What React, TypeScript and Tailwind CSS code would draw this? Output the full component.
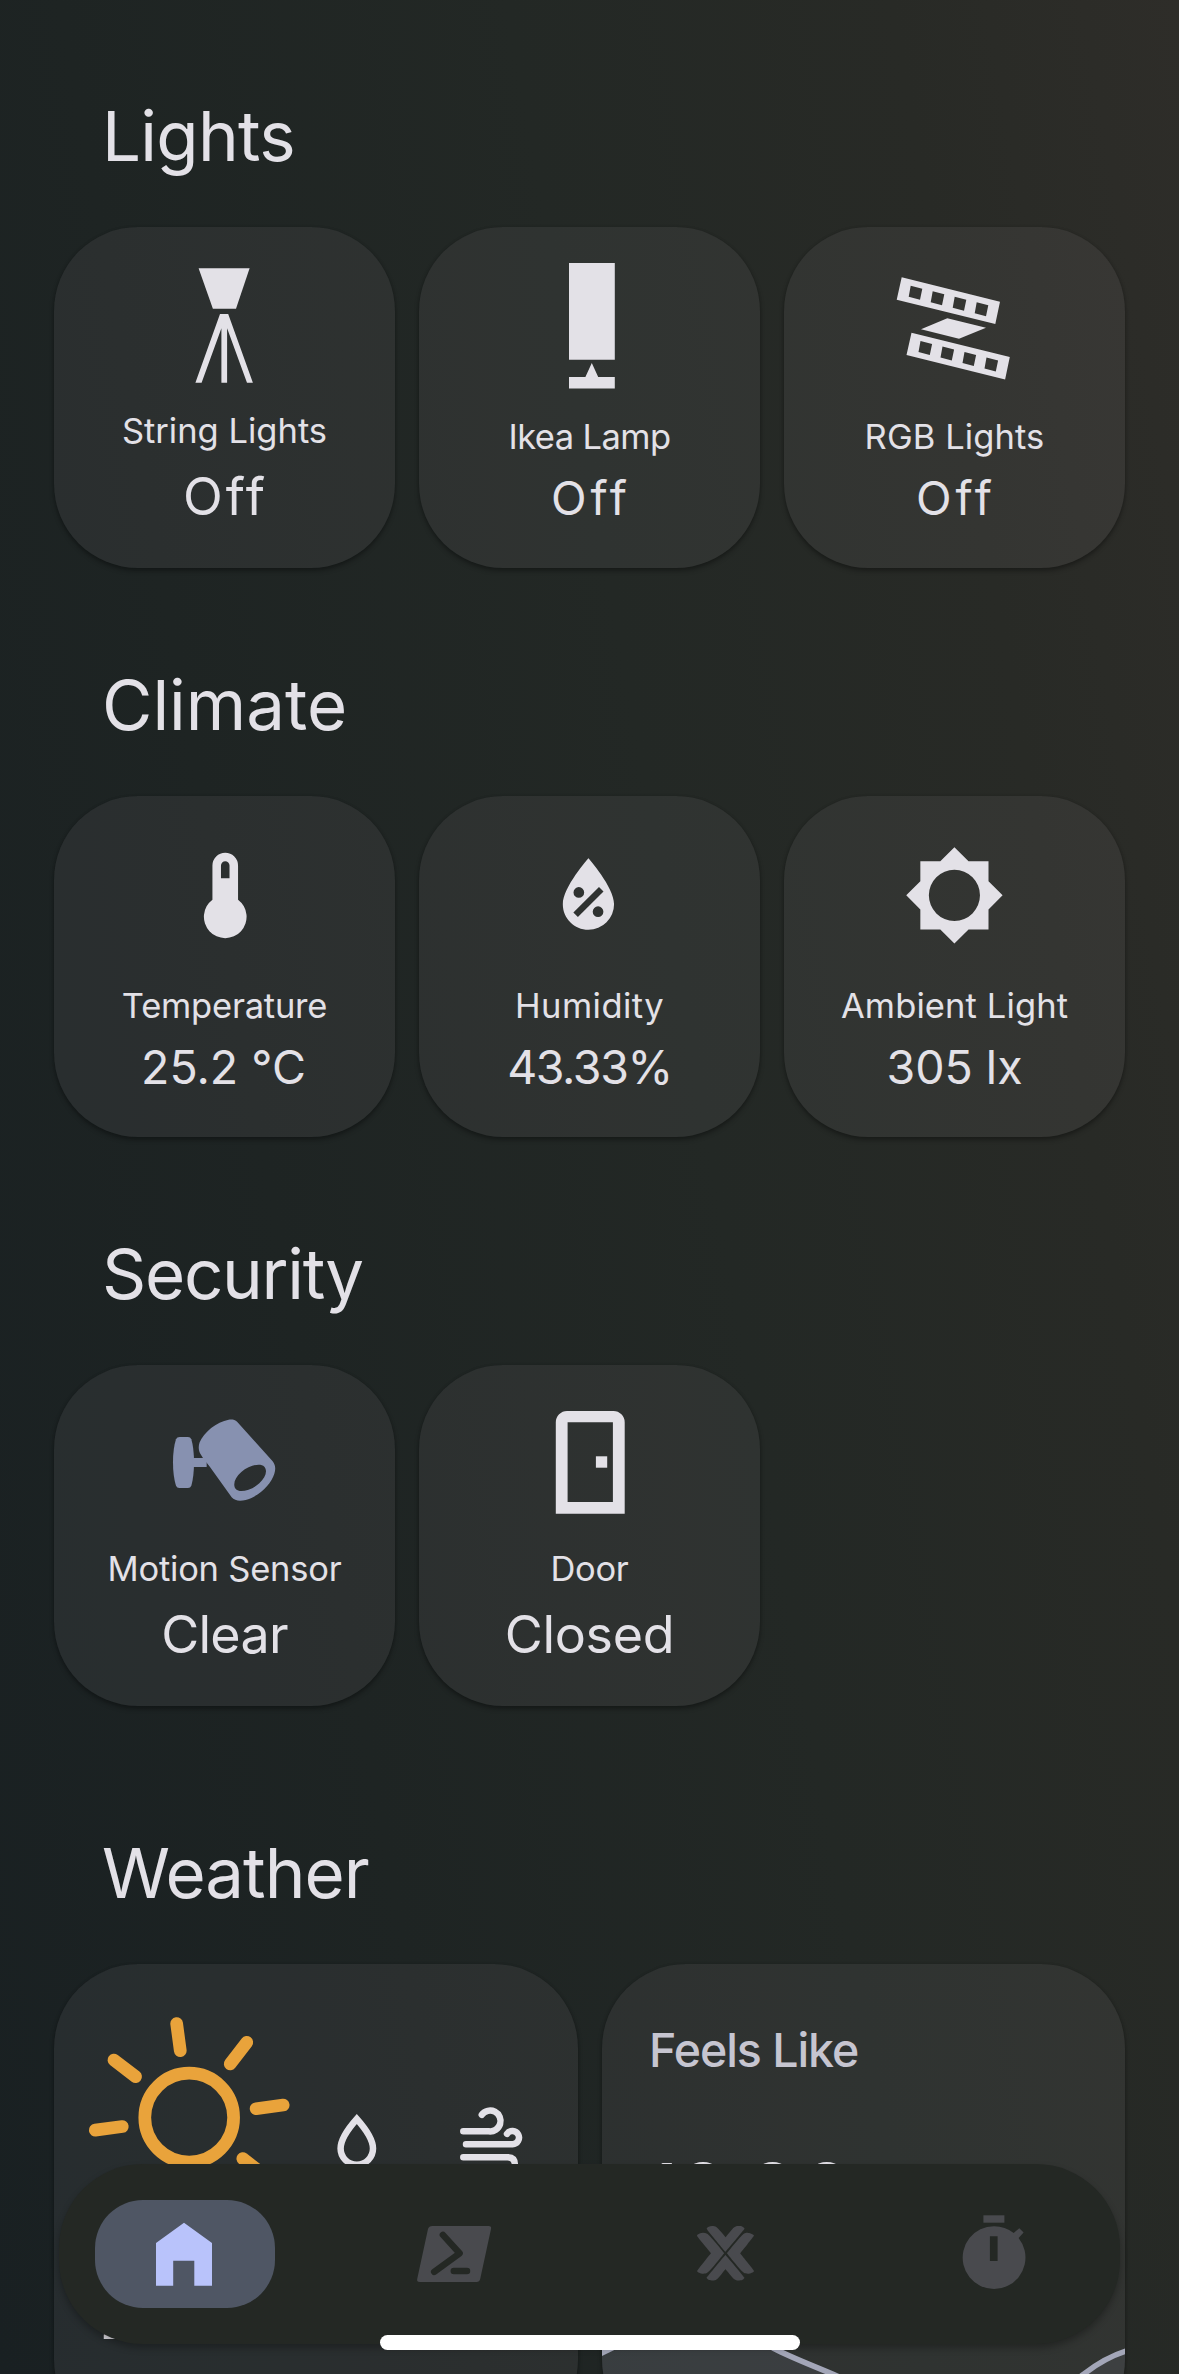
import React from "react";
import { SiProxmox } from "react-icons/si";

const cardBase =
  "rounded-[84px] bg-[#fff6fa]/[0.06] shadow-[0_3px_5px_rgba(0,0,0,0.32),0_0_3px_rgba(0,0,0,0.12)]";

function SectionTitle({ children, className }: { children: string; className: string }) {
  return (
    <h2 className={`mb-[51px] h-[80px] whitespace-nowrap text-[69px] leading-[80px] ${className}`}>{children}</h2>
  );
}

type TileProps = {
  icon: React.ReactNode;
  label: string;
  value: string;
  labelClass: string;
  valueClass: string;
  large?: boolean;
};

function Tile({ icon, label, value, labelClass, valueClass, large }: TileProps) {
  return (
    <div className={`flex h-[341px] w-[341px] flex-col items-center ${cardBase}`}>
      <div className={large ? "h-[182px] w-full" : "h-[188px] w-full"}>
        <svg viewBox="0 0 341 187" className="h-[187px] w-[341px]" fill="currentColor">
          {icon}
        </svg>
      </div>
      <div className={`h-[44px] whitespace-nowrap text-[34.5px] leading-[44px] ${labelClass}`}>{label}</div>
      <div
        className={`whitespace-nowrap ${
          large ? "mt-[10px] text-[52px] leading-[68px]" : "mt-[9px] text-[46.5px] leading-[60px]"
        } ${valueClass}`}
      >
        {value}
      </div>
    </div>
  );
}

const TripodLamp = (
  <>
    <path d="M144.6 41.3H195.6L182 81.7H158.9Z" />
    <path d="M166 87H174.2L198.9 155.7H193L173.1 101.3V155.7H167.4V101.3L147.6 155.7H141.4Z" />
  </>
);

const TableLamp = (
  <>
    <path d="M150 36H195.8V132.8H150Z" />
    <path d="M150 150H166.4L172.8 136L179.2 150H195.8V161.5H150Z" />
  </>
);

const stripPath =
  "M117.7 50.3L216 74.7L211.3 97L112.7 72.7Z" +
  "M126.7 58.7L124.7 69.7L136 72.7L138.3 61.7Z" +
  "M148.7 64.2L146.7 75.2L158 78.2L160.3 67.2Z" +
  "M170.7 69.7L168.7 80.7L180 83.7L182.3 72.7Z" +
  "M192.7 75.2L190.7 86.2L202 89.2L204.3 78.2Z";

const LedStrip = (
  <>
    <path fillRule="evenodd" d={stripPath} />
    <path d="M163.3 91.3L202 100.7L175 111.7L137 102.3Z" />
    <path fillRule="evenodd" d={stripPath} transform="translate(9.8 55.4)" />
  </>
);

const Thermometer = (
  <path
    transform="translate(120 48.2) scale(4.27)"
    d="M15 13V5A3 3 0 0 0 9 5V13A5 5 0 1 0 15 13M12 4A1 1 0 0 1 13 5V8H11V5A1 1 0 0 1 12 4Z"
  />
);

const HumidityDrop = (
  <path
    transform="translate(118.2 48.4) scale(4.27)"
    fillRule="evenodd"
    d="M12 3.25C12 3.25 6 10 6 14C6 17.32 8.69 20 12 20A6 6 0 0 0 18 14C18 10 12 3.25 12 3.25M14.47 9.97L15.53 11.03L9.53 17.03L8.47 15.97M9.75 10A1.25 1.25 0 0 1 11 11.25A1.25 1.25 0 0 1 9.75 12.5A1.25 1.25 0 0 1 8.5 11.25A1.25 1.25 0 0 1 9.75 10M14.25 14.5A1.25 1.25 0 0 1 15.5 15.75A1.25 1.25 0 0 1 14.25 17A1.25 1.25 0 0 1 13 15.75A1.25 1.25 0 0 1 14.25 14.5Z"
  />
);

const Brightness = (
  <path
    transform="translate(119.3 48.2) scale(4.26)"
    fillRule="evenodd"
    d="M12 18A6 6 0 0 1 6 12A6 6 0 0 1 12 6A6 6 0 0 1 18 12A6 6 0 0 1 12 18M20 15.31L23.31 12L20 8.69V4H15.31L12 0.69L8.69 4H4V8.69L0.69 12L4 15.31V20H8.69L12 23.31L15.31 20H20V15.31Z"
  />
);

const Camera = (
  <g transform="translate(106 25) scale(0.3333)" fill="#8791b0">
    <path d="M59 141H84Q91 141 94 148Q102 175 102 217Q102 260 94 287Q91 294 84 294H58Q51 294 48 287Q39 260 39 217Q39 175 48 148Q51 141 59 141Z" />
    <path d="M98 204H140V231H98Z" />
    <path
      fillRule="evenodd"
      d="M232 96L338 214C346 224 348 236 343 251C334 282 296 320 257 330C240 334 224 333 215 322L150 231L129 204L121 191C115 180 115 168 119 157C131 127 170 95 206 89C217 88 225 89 232 96Z
      M228 298C240 310 276 300 298 280C316 264 324 243 313 230C301 217 267 226 244 246C224 263 217 285 228 298Z"
    />
  </g>
);

const Door = (
  <>
    <path
      fillRule="evenodd"
      d="M148 46H194.5A11.3 11.3 0 0 1 205.7 57.3V148.7H136.8V57.3A11.3 11.3 0 0 1 148 46ZM148.6 57.3V137H193.9V57.3Z"
    />
    <path d="M176.9 91.3H188.2V102.7H176.9Z" />
  </>
);

function WeatherIcons() {
  return (
    <svg viewBox="0 0 524 240" className="h-[240px] w-[524px]" fill="none" strokeLinecap="round">
      <g stroke="#e9a33b" strokeWidth="12.7" transform="translate(135.2 153.6)">
        <circle r="44.4" />
        {[0, 45, 90, 135, 180, 225, 270, 315].map((a) => (
          <path key={a} d="M67.5 0H94.8" transform={`rotate(${a - 7.6})`} />
        ))}
      </g>
      <g stroke="currentColor" strokeWidth="6.5">
        <path d="M302.8 155C297 161.5 286.6 175 286.6 184.5A16.2 16.2 0 0 0 319 184.5C319 175 308.6 161.5 302.8 155Z" />
        <path d="M409.3 167.3H434.8A10.4 10.4 0 1 0 427.8 150.8" />
        <path d="M412 180.2H458.6A6.6 6.6 0 1 0 453 169.8" />
        <path d="M409.3 193.2H453.5Q461 193.2 461 201" />
      </g>
    </svg>
  );
}

const chartLine =
  "M-4 391L12 383C60 355 120 352 171 384C190 394 212 402 235 412C300 440 430 450 482 410C495 400 509 391 528 386";

function NavBar() {
  return (
    <nav className="absolute left-[59px] top-[2164px] flex h-[180px] w-[1061px] justify-between rounded-[84px] bg-[#242824] py-[36px] pl-[36px] pr-[35px] text-[#494a4e] shadow-[0_4px_7px_rgba(0,0,0,0.28)]">
      <div className="h-[108px] w-[180px] rounded-[48px] bg-[#4f5664] text-[#b9c3fb]">
        <svg viewBox="0 0 180 108" className="h-full w-full" fill="currentColor">
          <path d="M89 22.8L117 43V85.7H99.3V60.8H78.2V85.7H61V43Z" />
        </svg>
      </div>
      <div className="h-[108px] w-[180px]">
        <svg viewBox="0 0 180 108" className="h-full w-full">
          <path
            fill="currentColor"
            d="M67.5 26H123.5Q126.8 26 126 29L115.2 79Q114.5 82 111.5 82H54.8Q51.5 82 52.2 79L63 29Q63.8 26 67.5 26Z"
          />
          <g fill="none" stroke="#242824" strokeWidth="6.5" strokeLinecap="round" strokeLinejoin="round">
            <path d="M77.9 34.9L94.6 53.3L69.2 71.8M88.8 70.9H102" />
          </g>
        </svg>
      </div>
      <div className="flex h-[108px] w-[180px] items-center justify-center pb-[2px]">
        <SiProxmox preserveAspectRatio="none" className="h-[62.5px] w-[57px]" />
      </div>
      <div className="h-[108px] w-[180px]">
        <svg viewBox="0 0 180 108" className="h-full w-full" fill="currentColor">
          <path d="M78.4 15.3H99.4V22.7H78.4Z" />
          <path
            fillRule="evenodd"
            d="M89 26.2A31.4 31.4 0 0 1 108.7 33L114.3 28.2L118.6 32.5L113.6 38A31.4 31.4 0 1 1 89 26.2ZM84.9 36.3V61H92.6V36.3Z"
          />
        </svg>
      </div>
    </nav>
  );
}

export default function App() {
  return (
    <main className="relative h-[2374px] w-[1179px] overflow-hidden bg-[linear-gradient(80deg,#192022_0%,#1e2423_30%,#232825_58%,#282a26_82%,#2e2d29_100%)] px-[54px] pt-[96px] font-['Inter',sans-serif] text-[#e3e1e7]">
      <section>
        <SectionTitle className="pl-[48px] tracking-[-0.7px]">Lights</SectionTitle>
        <div className="flex gap-[24px]">
          <Tile large icon={TripodLamp} label="String Lights" value="Off" labelClass="" valueClass="pl-[2px] tracking-[3px]" />
          <Tile icon={TableLamp} label="Ikea Lamp" value="Off" labelClass="tracking-[-0.58px]" valueClass="pl-[3px] tracking-[3.9px]" />
          <Tile icon={LedStrip} label="RGB Lights" value="Off" labelClass="tracking-[0.1px]" valueClass="pl-[3px] tracking-[3.9px]" />
        </div>
      </section>

      <section className="mt-[97px]">
        <SectionTitle className="pl-[48px]">Climate</SectionTitle>
        <div className="flex gap-[24px]">
          <Tile icon={Thermometer} label="Temperature" value="25.2 °C" labelClass="tracking-[-0.21px]" valueClass="pr-[2px]" />
          <Tile icon={HumidityDrop} label="Humidity" value="43.33%" labelClass="tracking-[0.46px]" valueClass="tracking-[-1.4px]" />
          <Tile icon={Brightness} label="Ambient Light" value="305 lx" labelClass="tracking-[0.11px]" valueClass="" />
        </div>
      </section>

      <section className="mt-[97px]">
        <SectionTitle className="pl-[48px] tracking-[-1.29px]">Security</SectionTitle>
        <div className="flex gap-[24px]">
          <Tile large icon={Camera} label="Motion Sensor" value="Clear" labelClass="tracking-[-0.22px]" valueClass="tracking-[-0.75px]" />
          <Tile large icon={Door} label="Door" value="Closed" labelClass="tracking-[-0.26px]" valueClass="tracking-[-0.3px]" />
        </div>
      </section>

      <section className="mt-[127px]">
        <SectionTitle className="pl-[48px] tracking-[-1.01px]">Weather</SectionTitle>
        <div className="flex gap-[24px]">
          <div className={`h-[480px] w-[524px] ${cardBase}`}>
            <WeatherIcons />
            <div className="mt-[72px] pl-[45px] text-[64px] leading-[80px]">2</div>
          </div>
          <div className={`relative h-[480px] w-[523px] overflow-hidden ${cardBase}`}>
            <div className="whitespace-nowrap pl-[47px] pt-[56px] text-[46.5px] font-medium leading-[60px] tracking-[-1.05px] text-[#c6c5d0]">
              Feels Like
            </div>
            <div className="mt-[63px] whitespace-nowrap pl-[44px] text-[81px] leading-[100px]">
              <span className="tracking-[-1px]">18.</span>
              <span className="tracking-[4px]">88</span>
            </div>
            <svg viewBox="0 0 524 480" className="absolute inset-0 h-[480px] w-[524px]" fill="none">
              <path d={`${chartLine}V480H-4Z`} fill="#a9b4d0" fillOpacity="0.1" />
              <path d={chartLine} stroke="#a3a6b8" strokeWidth="5.5" />
            </svg>
          </div>
        </div>
      </section>

      <NavBar />
      <div className="absolute left-[380px] top-[2335px] h-[15px] w-[420px] rounded-full bg-white" />
    </main>
  );
}
